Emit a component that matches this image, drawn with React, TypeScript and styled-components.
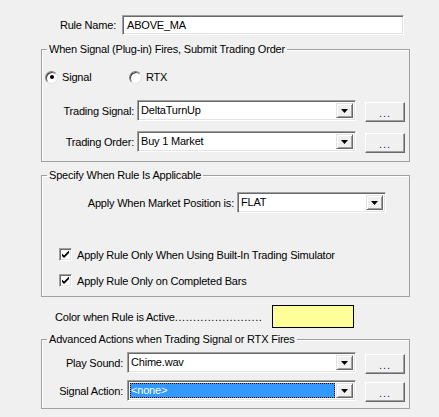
import styled, { createGlobalStyle } from "styled-components";

// ============ 전역 스타일 =============
const GlobalStyle = createGlobalStyle`
  html, body {
    margin: 0;
    padding: 0;
    background: #f0f0f0;
  }
  * {
    box-sizing: border-box;
  }
`;

// ============ 콤보박스 (드롭다운) =============
const ComboBox = ({ value, width, selected }: IComboProps) => {
  return (
    <ComboWrap $width={width}>
      <ComboText $selected={selected}>
        <span>{value}</span>
      </ComboText>
      <ArrowButton>
        <svg width="7" height="4" viewBox="0 0 7 4">
          <path d="M0 0 H7 L3.5 4 Z" fill="#000" />
        </svg>
      </ArrowButton>
    </ComboWrap>
  );
};

const CheckMark = () => (
  <svg width="9" height="9" viewBox="0 0 9 9">
    <path d="M1 3.5 L3 5.5 L8 0.5 V3 L3 8 L1 6 Z" fill="#000" />
  </svg>
);

const App = () => {
  return (
    <>
      <GlobalStyle />
      <Page>
        <NameRow>
          <Label $width={75}>Rule Name:</Label>
          <TextBox>ABOVE_MA</TextBox>
        </NameRow>

        {/* 시그널 발생 시 주문 */}
        <Group>
          <Legend>When Signal (Plug-in) Fires, Submit Trading Order</Legend>
          <GroupBody $top={14} $bottom={9}>
            <RadioRow>
              <RadioItem $width={84}>
                <Radio $checked />
                <span>Signal</span>
              </RadioItem>
              <RadioItem>
                <Radio />
                <span>RTX</span>
              </RadioItem>
            </RadioRow>
            <FieldList $gap={10} $top={16}>
              <FieldRow>
                <Label $width={92}>Trading Signal:</Label>
                <ComboBox value="DeltaTurnUp" width={219} />
                <DotButton>...</DotButton>
              </FieldRow>
              <FieldRow>
                <Label $width={92}>Trading Order:</Label>
                <ComboBox value="Buy 1 Market" width={219} />
                <DotButton>...</DotButton>
              </FieldRow>
            </FieldList>
          </GroupBody>
        </Group>

        {/* 룰 적용 조건 */}
        <Group $top={6}>
          <Legend>Specify When Rule Is Applicable</Legend>
          <GroupBody $top={10} $bottom={9}>
            <FieldRow>
              <Label $width={192}>Apply When Market Position is:</Label>
              <ComboBox value="FLAT" width={149} />
            </FieldRow>
            <CheckList>
              <CheckRow>
                <CheckBox>
                  <CheckMark />
                </CheckBox>
                <span>Apply Rule Only When Using Built-In Trading Simulator</span>
              </CheckRow>
              <CheckRow>
                <CheckBox>
                  <CheckMark />
                </CheckBox>
                <span>Apply Rule Only on Completed Bars</span>
              </CheckRow>
            </CheckList>
          </GroupBody>
        </Group>

        <ColorRow>
          <span>Color when Rule is Active</span>
          <DotLeader>........................</DotLeader>
          <Swatch $color="#ffff99" />
        </ColorRow>

        {/* 고급 액션 */}
        <Group $top={4}>
          <Legend>Advanced Actions when Trading Signal or RTX Fires</Legend>
          <GroupBody $top={6} $bottom={7}>
            <FieldList $gap={7}>
              <FieldRow>
                <Label $width={81} $gap={4}>
                  Play Sound:
                </Label>
                <ComboBox value="Chime.wav" width={229} />
                <DotButton>...</DotButton>
              </FieldRow>
              <FieldRow>
                <Label $width={81} $gap={4}>
                  Signal Action:
                </Label>
                <ComboBox value="<none>" width={229} selected />
                <DotButton>...</DotButton>
              </FieldRow>
            </FieldList>
          </GroupBody>
        </Group>
      </Page>
    </>
  );
};

export default App;

interface IComboProps {
  value: string;
  width: number;
  selected?: boolean;
}

// ============ 레이아웃 =============

const Page = styled.div`
  width: 439px;
  height: 417px;
  overflow: hidden;
  background: #f0f0f0;
  padding: 15px 29px 0 41px;
  display: flex;
  flex-direction: column;
  font-family: "Liberation Sans", Arial, sans-serif;
  font-size: 11px;
  letter-spacing: -0.2px;
  color: #000;
`;

const NameRow = styled.div`
  display: flex;
  align-items: center;
  height: 20px;
`;

const Label = styled.span<{ $width: number; $gap?: number }>`
  width: ${(p) => p.$width}px;
  margin-right: ${(p) => p.$gap ?? 3}px;
  text-align: right;
  white-space: nowrap;
  flex-shrink: 0;
`;

// 움푹 들어간 3D 테두리
const sunken = `
  background: #fff;
  border-top: 1px solid #a0a0a0;
  border-left: 1px solid #a0a0a0;
  border-right: 1px solid #fff;
  border-bottom: 1px solid #fff;
  box-shadow: inset 1px 1px 0 #696969, inset -1px -1px 0 #e3e3e3;
`;

const TextBox = styled.div`
  ${sunken}
  margin-left: 3px;
  width: 282px;
  height: 20px;
  line-height: 18px;
  padding-left: 4px;
`;

const Group = styled.fieldset<{ $top?: number }>`
  margin: ${(p) => p.$top ?? 7}px 0 0 0;
  padding: 0;
  min-width: 0;
  width: 369px;
  border: 1px solid #a0a0a0;
  box-shadow: inset 1px 1px 0 #fff;
`;

const Legend = styled.legend`
  margin-left: 5px;
  padding: 0 2px;
  line-height: 14px;
  height: 14px;
`;

const GroupBody = styled.div<{ $top: number; $bottom: number }>`
  padding: ${(p) => p.$top}px 0 ${(p) => p.$bottom}px 0;
`;

const RadioRow = styled.div`
  display: flex;
  align-items: center;
  height: 14px;
  padding-left: 3px;
`;

const RadioItem = styled.label<{ $width?: number }>`
  display: flex;
  align-items: center;
  gap: 4px;
  width: ${(p) => (p.$width ? `${p.$width}px` : "auto")};
`;

const Radio = styled.span<{ $checked?: boolean }>`
  width: 13px;
  height: 13px;
  border-radius: 50%;
  background: #fff;
  border: 1px solid;
  border-color: #808080 #e3e3e3 #e3e3e3 #808080;
  box-shadow: inset 1px 1px 0 #404040;
  display: flex;
  align-items: center;
  justify-content: center;

  &::after {
    content: "";
    width: 4px;
    height: 4px;
    border-radius: 50%;
    background: ${(p) => (p.$checked ? "#000" : "transparent")};
  }
`;

const FieldList = styled.div<{ $gap: number; $top?: number }>`
  display: flex;
  flex-direction: column;
  gap: ${(p) => p.$gap}px;
  margin-top: ${(p) => p.$top ?? 0}px;
`;

const FieldRow = styled.div`
  display: flex;
  align-items: center;
  height: 21px;
`;

const ComboWrap = styled.div<{ $width: number }>`
  ${sunken}
  width: ${(p) => p.$width}px;
  height: 21px;
  padding: 2px;
  display: flex;
  flex-shrink: 0;
`;

const ComboText = styled.div<{ $selected?: boolean }>`
  flex: 1;
  display: flex;
  align-items: center;
  padding-right: 1px;

  > span {
    flex: 1;
    height: 100%;
    line-height: 15px;
    padding-left: 1px;
    white-space: nowrap;
    background: ${(p) => (p.$selected ? "#3399ff" : "transparent")};
    color: ${(p) => (p.$selected ? "#fff" : "#000")};
    outline: ${(p) => (p.$selected ? "1px dotted #000" : "none")};
    outline-offset: -1px;
  }
`;

const ArrowButton = styled.div`
  width: 17px;
  height: 100%;
  background: #f0f0f0;
  border-top: 1px solid #e3e3e3;
  border-left: 1px solid #e3e3e3;
  border-right: 1px solid #696969;
  border-bottom: 1px solid #696969;
  box-shadow: inset 1px 1px 0 #fff, inset -1px -1px 0 #a0a0a0;
  display: flex;
  align-items: center;
  justify-content: center;
`;

const DotButton = styled.button`
  margin-left: 9px;
  width: 40px;
  height: 20px;
  margin-top: 2px;
  padding: 0 0 2px 0;
  font-family: inherit;
  font-size: 11px;
  letter-spacing: 1px;
  color: #1a1a5a;
  background: #f0f0f0;
  border-top: 1px solid #fff;
  border-left: 1px solid #fff;
  border-right: 1px solid #696969;
  border-bottom: 1px solid #696969;
  box-shadow: inset -1px -1px 0 #a0a0a0;
  display: flex;
  align-items: flex-end;
  justify-content: center;
`;

const CheckList = styled.div`
  display: flex;
  flex-direction: column;
  gap: 13px;
  margin-top: 35px;
  padding-left: 17px;
`;

const CheckRow = styled.label`
  display: flex;
  align-items: center;
  gap: 5px;
  height: 13px;
`;

const CheckBox = styled.span`
  width: 13px;
  height: 13px;
  background: #fff;
  border-top: 1px solid #a0a0a0;
  border-left: 1px solid #a0a0a0;
  border-right: 1px solid #fff;
  border-bottom: 1px solid #fff;
  box-shadow: inset 1px 1px 0 #696969, inset -1px -1px 0 #e3e3e3;
  display: flex;
  align-items: center;
  justify-content: center;
`;

const ColorRow = styled.div`
  display: flex;
  align-items: center;
  margin-top: 8px;
  padding: 0 56px 0 14px;
  white-space: nowrap;
`;

const DotLeader = styled.span`
  flex: 1;
  letter-spacing: 0.6px;
  margin-right: 2px;
`;

const Swatch = styled.div<{ $color: string }>`
  width: 82px;
  height: 23px;
  background: ${(p) => p.$color};
  border: 1px solid #000;
  flex-shrink: 0;
`;
